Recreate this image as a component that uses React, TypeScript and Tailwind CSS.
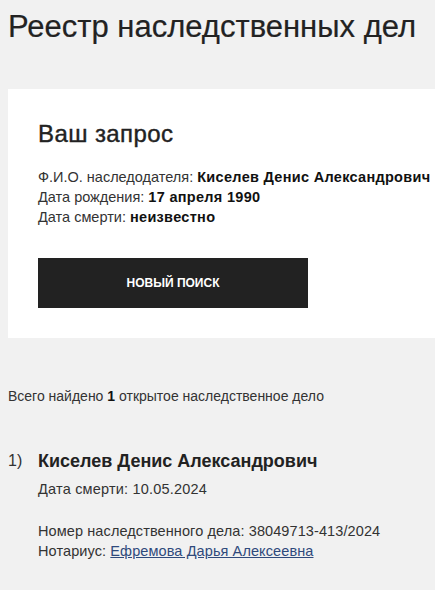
export default function App() {
  return (
    <div
      className="min-h-[590px] w-full overflow-hidden bg-[#f1f1f1] text-[#333]"
      style={{ fontFamily: '"Liberation Sans", Arial, sans-serif' }}
    >
      <h1 className="px-2 pt-[9px] text-[31px] leading-[36px] font-normal text-[#222] [-webkit-text-stroke:0.2px_#222]">
        Реестр наследственных дел
      </h1>

      <div className="ml-2 mt-[44px] bg-white pl-[30px] pt-[31px] pb-[30px]">
        <h2 className="text-[24px] leading-[28px] tracking-[0.4px] font-normal text-[#222] [-webkit-text-stroke:0.4px_#222]">
          Ваш запрос
        </h2>
        <div className="mt-[19px] whitespace-nowrap text-[14.5px] leading-[20px]">
          <p>
            Ф.И.О. наследодателя:{" "}
            <b className="tracking-[0.3px] text-[#111]">Киселев Денис Александрович</b>
          </p>
          <p>
            Дата рождения: <b className="tracking-[0.3px] text-[#111]">17 апреля 1990</b>
          </p>
          <p>
            Дата смерти: <b className="tracking-[0.3px] text-[#111]">неизвестно</b>
          </p>
        </div>
        <button className="mt-[31px] flex h-[50px] w-[270px] items-center justify-center bg-[#222] text-[12px] font-bold text-white">
          НОВЫЙ ПОИСК
        </button>
      </div>

      <p className="mt-[48px] px-2 text-[14px] leading-[20px]">
        Всего найдено <b className="text-[#111]">1</b> открытое наследственное дело
      </p>

      <ol className="mt-[43px] px-2">
        <li className="flex">
          <span className="w-[30px] text-[16px] leading-[24px]">1)</span>
          <div>
            <div className="text-[18px] leading-[24px] font-bold text-[#222]">
              Киселев Денис Александрович
            </div>
            <div className="mt-[6px] text-[14.5px] leading-[20px] tracking-[0.2px]">
              Дата смерти: 10.05.2024
            </div>
            <div className="mt-[22px] text-[14.5px] leading-[20px] tracking-[0.1px]">
              Номер наследственного дела: 38049713-413/2024
            </div>
            <div className="text-[14.5px] leading-[20px] tracking-[0.1px]">
              Нотариус:{" "}
              <a href="#" className="text-[#2f4a7c] underline">
                Ефремова Дарья Алексеевна
              </a>
            </div>
          </div>
        </li>
      </ol>
    </div>
  );
}
